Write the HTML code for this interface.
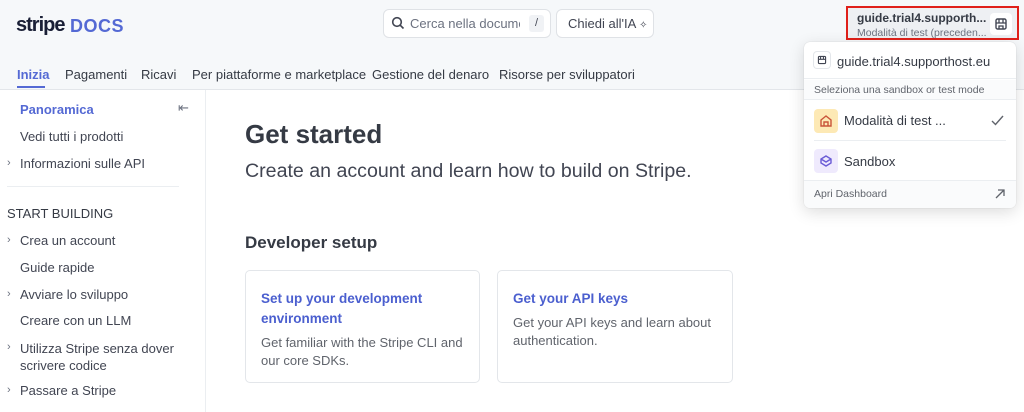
<!DOCTYPE html>
<html><head><meta charset="utf-8"><style>
*{box-sizing:border-box;margin:0;padding:0}
body{width:1024px;height:412px;overflow:hidden;background:#fff;font-family:"Liberation Sans",sans-serif;color:#353a44;position:relative}
.a{position:absolute;white-space:nowrap}
.hdr{position:absolute;left:0;top:0;width:1024px;height:90px;background:#f6f8fa;border-bottom:1px solid #e3e6ea}
.tab{font-size:13px;color:#353a44;top:67px}
.sb{font-size:13px;color:#414552}
.chev{font-size:11px;color:#6c7280}
.card{position:absolute;border:1px solid #e3e6ea;border-radius:5px;background:#fff}
.card h4{font-size:13.5px;color:#4b5fcf;font-weight:bold;line-height:20px}
.card p{font-size:13px;color:#60646c;line-height:18px;margin-top:5px}
</style></head><body>
<div class="hdr"></div>
<div class="a" style="left:16px;top:14px;font-size:20px;font-weight:bold;color:#1a1f36;letter-spacing:-1px">stripe</div>
<div class="a" style="left:70px;top:16px;font-size:18px;font-weight:bold;color:#5469d4;letter-spacing:0.5px">DOCS</div>
<div class="a" style="left:383px;top:9px;width:168px;height:29px;background:#fff;border:1px solid #dfe2e6;border-radius:6px"></div>
<svg class="a" style="left:391px;top:16px" width="14" height="14" viewBox="0 0 14 14"><circle cx="6" cy="6" r="4.3" fill="none" stroke="#414552" stroke-width="1.6"/><path d="M9.2 9.2L12.5 12.5" stroke="#414552" stroke-width="1.6"/></svg>
<div class="a" style="left:410px;top:16px;font-size:13px;color:#6c7280;width:110px;overflow:hidden">Cerca nella documentazione</div>
<div class="a" style="left:529px;top:15px;width:15px;height:17px;background:#f0f2f5;border-radius:3px;font-size:11px;color:#414552;text-align:center;line-height:17px">/</div>
<div class="a" style="left:556px;top:9px;width:98px;height:29px;background:#fff;border:1px solid #dfe2e6;border-radius:6px;font-size:13px;color:#414552;padding:6px 0 0 11px">Chiedi all'IA <span style="font-size:10px">✧</span></div>
<div class="a" style="left:846px;top:6px;width:173px;height:34px;border:2px solid #e0201a;background:#eef0f3"></div>
<div class="a" style="left:857px;top:11px;font-size:12px;font-weight:bold;color:#353a44">guide.trial4.supporth...</div>
<div class="a" style="left:857px;top:27px;font-size:10.5px;color:#6c7280">Modalità di test (preceden...</div>
<div class="a" style="left:990px;top:13px;width:22px;height:22px;background:#fff;border-radius:4px"></div>
<svg class="a" style="left:994px;top:17px" width="14" height="14" viewBox="0 0 14 14"><rect x="2" y="2" width="10" height="10" rx="1.5" fill="none" stroke="#414552" stroke-width="1.4"/><path d="M2 6h10M5 2v4M9 2v4M5 12V9h4v3" stroke="#414552" stroke-width="1.3" fill="none"/></svg>
<div class="a tab" style="left:17px;color:#5469d4;font-weight:bold">Inizia</div>
<div class="a" style="left:17px;top:86px;width:28px;height:2px;background:#5469d4"></div>
<div class="a tab" style="left:65px">Pagamenti</div>
<div class="a tab" style="left:141px">Ricavi</div>
<div class="a tab" style="left:192px">Per piattaforme e marketplace</div>
<div class="a tab" style="left:372px">Gestione del denaro</div>
<div class="a tab" style="left:499px">Risorse per sviluppatori</div>
<div class="a" style="left:205px;top:90px;width:1px;height:322px;background:#ebeef1"></div>
<div class="a sb" style="left:20px;top:102px;color:#5469d4;font-weight:bold">Panoramica</div>
<div class="a" style="left:178px;top:100px;font-size:13px;color:#6c7280">⇤</div>
<div class="a sb" style="left:20px;top:129px">Vedi tutti i prodotti</div>
<div class="a chev" style="left:7px;top:157px">›</div><div class="a sb" style="left:20px;top:156px">Informazioni sulle API</div>
<div class="a" style="left:7px;top:186px;width:172px;height:1px;background:#ebeef1"></div>
<div class="a sb" style="left:7px;top:206px;color:#353a44">START BUILDING</div>
<div class="a chev" style="left:7px;top:234px">›</div><div class="a sb" style="left:20px;top:233px">Crea un account</div>
<div class="a sb" style="left:20px;top:260px">Guide rapide</div>
<div class="a chev" style="left:7px;top:288px">›</div><div class="a sb" style="left:20px;top:287px">Avviare lo sviluppo</div>
<div class="a sb" style="left:20px;top:313px">Creare con un LLM</div>
<div class="a chev" style="left:7px;top:341px">›</div><div class="a sb" style="left:20px;top:340px;line-height:17px">Utilizza Stripe senza dover<br>scrivere codice</div>
<div class="a chev" style="left:7px;top:384px">›</div><div class="a sb" style="left:20px;top:383px">Passare a Stripe</div>
<div class="a" style="left:245px;top:119px;font-size:26px;font-weight:bold;color:#353a44">Get started</div>
<div class="a" style="left:245px;top:160px;font-size:19.6px;color:#414552">Create an account and learn how to build on Stripe.</div>
<div class="a" style="left:245px;top:233px;font-size:17px;font-weight:bold;color:#353a44">Developer setup</div>
<div class="card" style="left:245px;top:270px;width:235px;height:113px;padding:18px 15px"><h4>Set up your development environment</h4><p>Get familiar with the Stripe CLI and our core SDKs.</p></div>
<div class="card" style="left:497px;top:270px;width:236px;height:113px;padding:18px 15px"><h4>Get your API keys</h4><p>Get your API keys and learn about authentication.</p></div>
<div class="a" style="left:804px;top:42px;width:212px;height:166px;background:#fff;border-radius:6px;box-shadow:0 4px 16px rgba(0,0,0,.14),0 0 1px rgba(0,0,0,.2);overflow:hidden">
 <div style="position:absolute;left:0;top:0;width:212px;height:37px;border-bottom:1px solid #ebeef1"></div>
 <div style="position:absolute;left:10px;top:10px;width:16px;height:16px;border-radius:3px;box-shadow:0 0 0 1px #e3e6ea"></div>
 <svg style="position:absolute;left:13px;top:13px" width="10" height="10" viewBox="0 0 14 14"><rect x="2" y="2" width="10" height="10" rx="1.5" fill="none" stroke="#414552" stroke-width="1.6"/><path d="M2 6h10M5 2v4M9 2v4" stroke="#414552" stroke-width="1.5"/></svg>
 <div style="position:absolute;left:33px;top:12px;font-size:13px;color:#353a44">guide.trial4.supporthost.eu</div>
 <div style="position:absolute;left:0;top:38px;width:212px;height:20px;background:#fafbfc;border-bottom:1px solid #ebeef1"></div>
 <div style="position:absolute;left:10px;top:42px;font-size:10.5px;color:#60646c">Seleziona una sandbox or test mode</div>
 <div style="position:absolute;left:10px;top:67px;width:24px;height:24px;background:#fde9b5;border-radius:4px"></div>
 <svg style="position:absolute;left:15px;top:72px" width="14" height="14" viewBox="0 0 14 14"><path d="M2 6L7 2l5 4v6H2z M5 12V8h4v4" fill="none" stroke="#c9543a" stroke-width="1.4"/></svg>
 <div style="position:absolute;left:40px;top:71px;font-size:13px;color:#353a44">Modalità di test ...</div>
 <svg style="position:absolute;left:187px;top:73px" width="13" height="11" viewBox="0 0 13 11"><path d="M1 6l3.5 3.5L12 1" fill="none" stroke="#60646c" stroke-width="1.4"/></svg>
 <div style="position:absolute;left:10px;top:98px;width:192px;height:1px;background:#ebeef1"></div>
 <div style="position:absolute;left:10px;top:107px;width:24px;height:24px;background:#efeafd;border-radius:4px"></div>
 <svg style="position:absolute;left:15px;top:112px" width="14" height="14" viewBox="0 0 14 14"><path d="M7 2l5 3v4l-5 3-5-3V5z M2 5l5 3 5-3" fill="none" stroke="#6a5bd6" stroke-width="1.4"/></svg>
 <div style="position:absolute;left:40px;top:112px;font-size:13px;color:#353a44">Sandbox</div>
 <div style="position:absolute;left:0;top:138px;width:212px;height:28px;background:#fafbfc;border-top:1px solid #ebeef1"></div>
 <div style="position:absolute;left:10px;top:146px;font-size:10.5px;color:#60646c">Apri Dashboard</div>
 <svg style="position:absolute;left:191px;top:147px" width="10" height="10" viewBox="0 0 10 10"><path d="M1 9L9 1M3 1h6v6" fill="none" stroke="#60646c" stroke-width="1.3"/></svg>
</div>
</body></html>
